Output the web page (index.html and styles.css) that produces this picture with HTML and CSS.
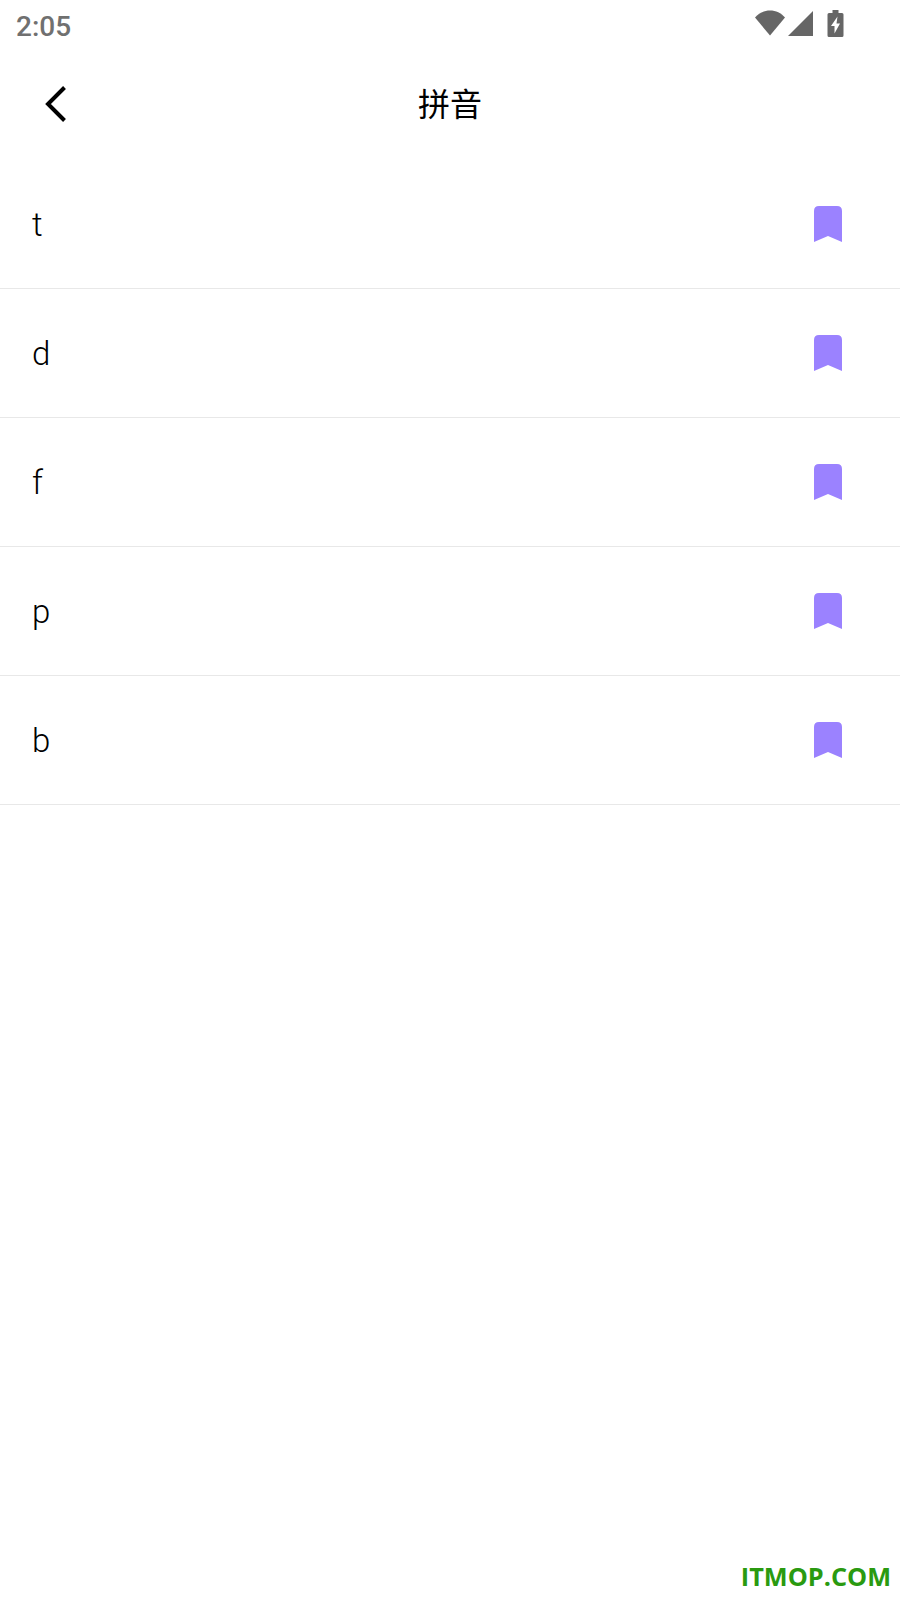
FILE: index.html
```html
<!DOCTYPE html>
<html lang="en">
<head>
    <meta charset="UTF-8">
    <meta name="viewport" content="width=device-width, initial-scale=1.0">
    <title>拼音</title>
    <link rel="stylesheet" href="styles.css">
</head>
<body>

<div class="status-bar">
    <span class="time">2:05</span>
    <div class="status-icons">
        <svg class="wifi" width="30" height="26" viewBox="0 0 30 26"><path d="M0 7.500C4 3 9 .5 15 .5S26 3 30 7.500L15 25.500z"/></svg>
        <svg class="signal" width="25" height="25" viewBox="0 0 25 25"><path d="M25 0V25H0z"/></svg>
        <svg class="battery" width="17" height="27" viewBox="0 0 17 27"><path fill-rule="evenodd" d="M5.500 0h6v3h3.500q1.500 0 1.500 1.500V25.500q0 1.500-1.500 1.500H2q-1.500 0-1.500-1.500V4.500Q.5 3 2 3h3.500zM10.500 6.500 4 16h3.500v7.500L13 13.500H9.500z"/></svg>
    </div>
</div>

<div class="app-bar">
    <svg class="back" width="26" height="40" viewBox="0 0 26 40"><path d="M22.500 3.500 6 20l16.500 16.500" fill="none" stroke="#000" stroke-width="4"/></svg>
    <h1>拼音</h1>
</div>

<div class="list">
    <div class="row"><span>t</span><svg class="bookmark" width="28" height="36" viewBox="0 0 28 36"><path d="M5 0h18q5 0 5 5v31l-14-6-14 6V5q0-5 5-5z"/></svg></div>
    <div class="row"><span>d</span><svg class="bookmark" width="28" height="36" viewBox="0 0 28 36"><path d="M5 0h18q5 0 5 5v31l-14-6-14 6V5q0-5 5-5z"/></svg></div>
    <div class="row"><span>f</span><svg class="bookmark" width="28" height="36" viewBox="0 0 28 36"><path d="M5 0h18q5 0 5 5v31l-14-6-14 6V5q0-5 5-5z"/></svg></div>
    <div class="row"><span>p</span><svg class="bookmark" width="28" height="36" viewBox="0 0 28 36"><path d="M5 0h18q5 0 5 5v31l-14-6-14 6V5q0-5 5-5z"/></svg></div>
    <div class="row"><span>b</span><svg class="bookmark" width="28" height="36" viewBox="0 0 28 36"><path d="M5 0h18q5 0 5 5v31l-14-6-14 6V5q0-5 5-5z"/></svg></div>
</div>

<div class="watermark">ITMOP.COM</div>

</body>
</html>
```

FILE: styles.css
```css
* {
    box-sizing: border-box;
    margin: 0;
    padding: 0;
}

body {
    position: relative;
    width: 900px;
    height: 1600px;
    overflow: hidden;
    background: #fff;
    color: #000;
    font-family: Roboto, "Noto Sans CJK SC", sans-serif;
}

.status-bar {
    height: 52px;
    display: flex;
    align-items: center;
    justify-content: space-between;
    padding: 0 56px 0 16px;
}

.time {
    font-size: 28px;
    font-weight: 500;
    color: #707070;
}

.status-icons {
    display: flex;
    align-items: center;
    gap: 3px;
    margin-top: -6px;
}

.status-icons svg {
    fill: #666;
}

.battery {
    margin-left: 11px;
}

.app-bar {
    height: 108px;
    display: flex;
    align-items: center;
    justify-content: center;
    padding-bottom: 8px;
    position: relative;
}

.app-bar h1 {
    font-size: 32px;
    font-weight: 400;
}

.back {
    position: absolute;
    left: 42px;
    top: 32px;
}

.row {
    height: 129px;
    display: flex;
    align-items: center;
    justify-content: space-between;
    padding: 0 58px 0 32px;
    border-bottom: 1px solid #e8e8e8;
    font-size: 33px;
    font-weight: 300;
}

.bookmark {
    fill: #9b82ff;
}

.watermark {
    position: absolute;
    right: 9px;
    bottom: 7px;
    font-family: "Open Sans", sans-serif;
    font-size: 25.3px;
    font-weight: 700;
    color: #2a9a10;
}
```
